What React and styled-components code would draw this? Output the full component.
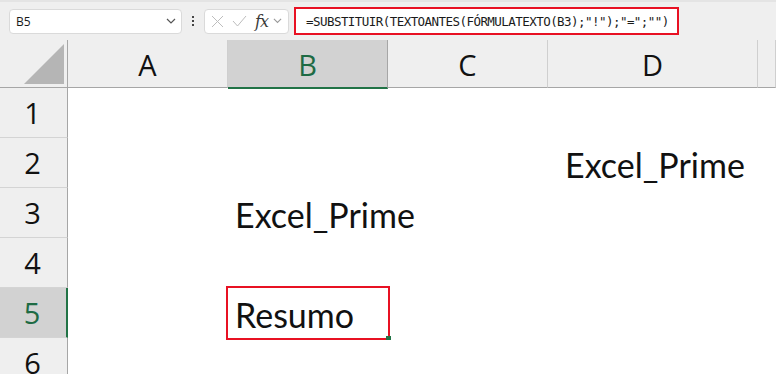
import React from "react";
import styled, { createGlobalStyle, css } from "styled-components";

const Global = createGlobalStyle`
  html, body { margin: 0; padding: 0; background: #ffffff; overflow: hidden; }
  #root { width: 776px; height: 374px; overflow: hidden; }
`;

const Page = styled.div`
  width: 776px;
  height: 374px;
  display: flex;
  flex-direction: column;
  background: #ffffff;
`;

const Toolbar = styled.div`
  height: 40px;
  flex: none;
  background: #efefef;
  border-top: 2px solid #e4e4e4;
  box-sizing: border-box;
  display: flex;
  align-items: center;
  padding-left: 9px;
  font-family: "Open Sans", "Noto Sans", sans-serif;
`;

const NameBox = styled.div`
  width: 173px;
  height: 25px;
  box-sizing: border-box;
  background: #fff;
  border: 1px solid #dadada;
  border-radius: 4px;
  display: flex;
  align-items: center;
  justify-content: space-between;
  padding: 0 5px 0 6px;
  font-size: 12px;
  color: #1a1a1a;
`;

const Dots = styled.div`
  width: 22px;
  display: flex;
  flex-direction: column;
  align-items: center;
  gap: 2px;
  span {
    width: 2px;
    height: 2px;
    background: #444;
  }
`;

const FxBox = styled.div`
  width: 85px;
  height: 25px;
  box-sizing: border-box;
  background: #fff;
  border: 1px solid #dadada;
  border-radius: 4px;
  display: flex;
  align-items: center;
  padding-left: 6px;
  gap: 8px;
`;

const Fx = styled.span`
  font-family: "DejaVu Serif", "Liberation Serif", serif;
  font-style: italic;
  font-size: 16px;
  color: #3a3a3a;
  letter-spacing: -1px;
  margin-right: -3px;
`;

const FormulaBox = styled.div`
  margin-left: 5px;
  width: 385px;
  height: 28px;
  box-sizing: border-box;
  background: #fff;
  border: 2px solid #e81123;
  display: flex;
  align-items: center;
  padding-left: 10px;
  font-family: "DejaVu Sans Mono", "Liberation Mono", monospace;
  font-size: 12.5px;
  letter-spacing: -0.55px;
  color: #1a1a1a;
  white-space: nowrap;
`;

const Sheet = styled.div`
  flex: 1;
  display: grid;
  grid-template-columns: 68px 160px 160px 160px 210px 1fr;
  grid-template-rows: 48px repeat(6, 50px);
  background: #ffffff;
  overflow: hidden;
`;

const Corner = styled.div`
  background: #efefef;
  border-right: 1px solid #a6a6a6;
  border-bottom: 1px solid #a6a6a6;
  box-sizing: border-box;
  position: relative;
`;

const Triangle = styled.div`
  position: absolute;
  right: 3px;
  bottom: 3px;
  width: 40px;
  height: 40px;
  background: #b5b5b5;
  clip-path: polygon(100% 0, 100% 100%, 0 100%);
`;

const ColHead = styled.div`
  box-sizing: border-box;
  background: ${(p) => (p.$sel ? "#d2d2d2" : "#efefef")};
  border-right: 1px solid ${(p) => (p.$sel ? "#a6a6a6" : "#cfcfcf")};
  border-bottom: ${(p) => (p.$sel ? "2px solid #217346" : "1px solid #a6a6a6")};
  ${(p) => p.$sel && css`margin-bottom: -1px;`}
  display: flex;
  align-items: center;
  justify-content: center;
  padding-top: 1px;
  font-family: "Open Sans", "Noto Sans", sans-serif;
  font-size: 29px;
  color: ${(p) => (p.$sel ? "#1e6b44" : "#111")};
`;

const RowHead = styled.div`
  box-sizing: border-box;
  background: ${(p) => (p.$sel ? "#d2d2d2" : "#efefef")};
  border-right: ${(p) => (p.$sel ? "2px solid #217346" : "1px solid #a6a6a6")};
  border-bottom: 1px solid #d4d4d4;
  display: flex;
  align-items: center;
  justify-content: center;
  padding-right: 2px;
  font-family: "Open Sans", "Noto Sans", sans-serif;
  font-size: 29px;
  color: ${(p) => (p.$sel ? "#1e6b44" : "#111")};
`;

const Cell = styled.div`
  box-sizing: border-box;
  display: flex;
  align-items: flex-end;
  padding-left: ${(p) => p.$pad || 7}px;
  padding-bottom: 3px;
  font-family: "Lato", "Open Sans", sans-serif;
  font-size: 34px;
  color: #111;
  white-space: nowrap;
  position: relative;
  ${(p) =>
    p.$active &&
    css`
      outline: 2px solid #e81123;
      outline-offset: 0px;
      &::after {
        content: "";
        position: absolute;
        right: -3px;
        bottom: -2px;
        width: 5px;
        height: 4px;
        background: #217346;
      }
    `}
`;

const Chevron = ({ color = "#555", size = 10 }) => (
  <svg width={size} height={size * 0.6} viewBox="0 0 10 6" fill="none">
    <path d="M1 1l4 4 4-4" stroke={color} strokeWidth="1.2" />
  </svg>
);

const Cross = () => (
  <svg width="13" height="13" viewBox="0 0 13 13" fill="none">
    <path d="M1 1l11 11M12 1L1 12" stroke="#bdbdbd" strokeWidth="1" />
  </svg>
);

const Check = () => (
  <svg width="15" height="12" viewBox="0 0 15 12" fill="none">
    <path d="M1 6l4.5 5L14 1" stroke="#bdbdbd" strokeWidth="1" />
  </svg>
);

const cols = ["A", "B", "C", "D", ""];

const data = {
  "2-3": { text: "Excel_Prime", pad: 17 },
  "3-1": { text: "Excel_Prime" },
  "5-1": { text: "Resumo", active: true },
};

export default function App() {
  const rows = [1, 2, 3, 4, 5, 6];
  return (
    <Page>
      <Global />
      <Toolbar>
        <NameBox>
          <span>B5</span>
          <Chevron />
        </NameBox>
        <Dots>
          <span />
          <span />
          <span />
        </Dots>
        <FxBox>
          <Cross />
          <Check />
          <Fx>fx</Fx>
          <Chevron color="#999" size={9} />
        </FxBox>
        <FormulaBox>=SUBSTITUIR(TEXTOANTES(FÓRMULATEXTO(B3);"!");"=";"")</FormulaBox>
      </Toolbar>
      <Sheet>
        <Corner>
          <Triangle />
        </Corner>
        {cols.map((c) => (
          <ColHead key={c || "E"} $sel={c === "B"}>
            {c}
          </ColHead>
        ))}
        {rows.map((r) => (
          <React.Fragment key={r}>
            <RowHead $sel={r === 5}>{r}</RowHead>
            {cols.map((c, i) => {
              const d = data[`${r}-${i}`];
              return (
                <Cell key={i} $pad={d && d.pad} $active={d && d.active}>
                  {d ? d.text : ""}
                </Cell>
              );
            })}
          </React.Fragment>
        ))}
      </Sheet>
    </Page>
  );
}
